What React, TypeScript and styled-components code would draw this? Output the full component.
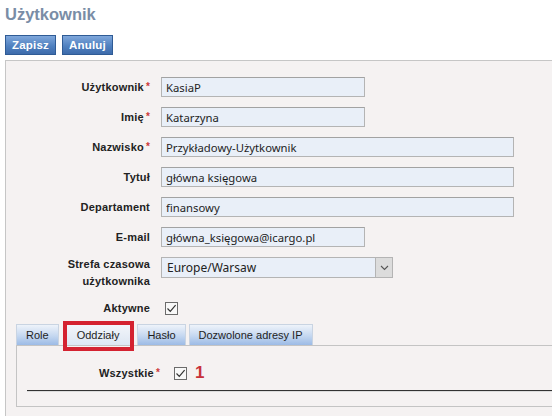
import React from "react";
import styled, { createGlobalStyle } from "styled-components";

const Global = createGlobalStyle`
  html, body { margin: 0; padding: 0; background: #ffffff; overflow: hidden; }
  body { font-family: "Liberation Sans", Arial, sans-serif; color: #222; }
`;

const Page = styled.div`
  padding: 3px 0 0 5px;
  width: 620px;
`;

const Title = styled.h1`
  margin: 0;
  font-family: "Liberation Sans", Arial, sans-serif;
  font-weight: bold;
  font-size: 16.5px;
  line-height: 22px;
  color: #7a8da6;
`;

const Toolbar = styled.div`
  display: flex;
  gap: 6px;
  margin-top: 10px;
`;

const Button = styled.button`
  height: 20px;
  width: 51px;
  padding: 0;
  border: 1px solid #2f5b95;
  background: linear-gradient(#7fa7db, #5081c0 55%, #3d6bab);
  color: #fff;
  font-family: "Liberation Sans", Arial, sans-serif;
  font-weight: bold;
  font-size: 11.5px;
  letter-spacing: 0.2px;
  cursor: pointer;
`;

const Panel = styled.div`
  margin-top: 5px;
  border: 1px solid #c6c6c6;
  background: #f5f2f2;
  padding: 16px 0 0 0;
  height: 420px;
`;

const FormGrid = styled.div`
  display: grid;
  grid-template-columns: 144px auto;
  column-gap: 11px;
  row-gap: 10px;
  align-items: center;
`;

const Label = styled.label<{ $multi?: boolean }>`
  text-align: right;
  font-weight: bold;
  font-size: 11px;
  letter-spacing: 0.2px;
  line-height: ${(p) => (p.$multi ? "17px" : "14px")};
  color: #222;
  ${(p) => p.$multi && "align-self: start; margin-top: -1px; padding-bottom: 1px;"}
`;

const Star = styled.span`
  color: #cc3838;
  font-size: 10px;
  margin-left: 2px;
  vertical-align: 1px;
`;

const TextInput = styled.input<{ $w: number }>`
  box-sizing: border-box;
  width: ${(p) => p.$w}px;
  height: 20px;
  border: 1px solid #b4b4b4;
  border-top-color: #a2a2a2;
  background: #e9eff8;
  padding: 0 4px;
  font-family: "Noto Sans", sans-serif;
  font-size: 11.3px;
  color: #1e1e1e;
  outline: none;
  justify-self: start;
`;

const SelectBox = styled.div`
  box-sizing: border-box;
  width: 232px;
  height: 21px;
  border: 1px solid #b4b4b4;
  background: #e9eff8;
  display: flex;
  align-items: center;
  justify-self: start;
  align-self: start;
`;

const SelectValue = styled.span`
  flex: 1;
  padding-left: 5px;
  font-family: "Noto Sans", sans-serif;
  font-size: 12px;
  color: #222;
`;

const SelectArrow = styled.span`
  width: 16px;
  height: 19px;
  background: #dcdcdc;
  border-left: 1px solid #b4b4b4;
  display: flex;
  align-items: center;
  justify-content: center;
`;

const Check = styled.span`
  box-sizing: border-box;
  width: 13px;
  height: 13px;
  border: 1px solid #6b6b6b;
  background: #f8f8f8;
  display: inline-flex;
  align-items: center;
  justify-content: center;
`;

const CheckCell = styled.div<{ $ml: number }>`
  display: flex;
  align-items: center;
  margin-left: ${(p) => p.$ml}px;
`;

const Tabs = styled.div`
  margin: 9px 0 0 10px;
`;

const TabBar = styled.div`
  display: flex;
  gap: 3px;
`;

const Tab = styled.div<{ $active?: boolean }>`
  position: relative;
  height: 20px;
  padding: 0 ${(p) => (p.$active ? 11 : 9)}px;
  margin: 0 ${(p) => (p.$active ? 3 : 0)}px;
  display: flex;
  align-items: center;
  font-family: "Liberation Sans", Arial, sans-serif;
  font-size: 11px;
  color: #1e1e1e;
  border: 1px solid #c9d4e2;
  border-bottom: none;
  background: ${(p) =>
    p.$active
      ? "linear-gradient(#f2f5fa, #dde6f2)"
      : "linear-gradient(#eef3fa, #c4d7f0 55%, #9cbbe6)"};

  ${(p) =>
    p.$active &&
    `
    &::after {
      content: "";
      position: absolute;
      top: -4px;
      left: -3px;
      right: -4px;
      bottom: -6px;
      border: 4px solid #d42230;
    }
  `}
`;

const TabPanel = styled.div`
  border: 1px solid #c4c4c4;
  border-right: none;
  background: #f5f2f2;
  padding: 20px 0 15px 0;
`;

const TabGrid = styled.div`
  display: grid;
  grid-template-columns: 143px auto;
  column-gap: 14px;
  align-items: center;
`;

const Annotation = styled.span`
  margin-left: 8px;
  color: #c8313a;
  font-weight: bold;
  font-size: 17px;
  line-height: 14px;
`;

const Divider = styled.div`
  margin: 10px 0 0 10px;
  height: 1px;
  background: #333;
  box-shadow: 0 1px 0 #dcdcdc;
`;

const Tick = () => (
  <svg width="11" height="11" viewBox="0 0 11 11">
    <path d="M1.5 5.5 L4.3 8.3 L9.6 2.2" fill="none" stroke="#333" strokeWidth="1.2" />
  </svg>
);

const Chevron = () => (
  <svg width="9" height="6" viewBox="0 0 9 6">
    <path d="M1 1 L4.5 4.5 L8 1" fill="none" stroke="#555" strokeWidth="1.1" />
  </svg>
);

type Field = { label: string; value: string; w: number; req?: boolean };

const fields: Field[] = [
  { label: "Użytkownik", value: "KasiaP", w: 204, req: true },
  { label: "Imię", value: "Katarzyna", w: 204, req: true },
  { label: "Nazwisko", value: "Przykładowy-Użytkownik", w: 353, req: true },
  { label: "Tytuł", value: "główna księgowa", w: 353 },
  { label: "Departament", value: "finansowy", w: 353 },
  { label: "E-mail", value: "główna_księgowa@icargo.pl", w: 204 },
];

export default function App() {
  return (
    <>
      <Global />
      <Page>
        <Title>Użytkownik</Title>
        <Toolbar>
          <Button>Zapisz</Button>
          <Button>Anuluj</Button>
        </Toolbar>
        <Panel>
          <FormGrid>
            {fields.map((f) => (
              <React.Fragment key={f.label}>
                <Label>
                  {f.label}
                  {f.req && <Star>*</Star>}
                </Label>
                <TextInput $w={f.w} readOnly value={f.value} />
              </React.Fragment>
            ))}
            <Label $multi>
              Strefa czasowa
              <br />
              użytkownika
            </Label>
            <SelectBox>
              <SelectValue>Europe/Warsaw</SelectValue>
              <SelectArrow>
                <Chevron />
              </SelectArrow>
            </SelectBox>
            <Label>Aktywne</Label>
            <CheckCell $ml={4}>
              <Check>
                <Tick />
              </Check>
            </CheckCell>
          </FormGrid>
          <Tabs>
            <TabBar>
              <Tab>Role</Tab>
              <Tab $active>Oddziały</Tab>
              <Tab>Hasło</Tab>
              <Tab>Dozwolone adresy IP</Tab>
            </TabBar>
            <TabPanel>
              <TabGrid>
                <Label>
                  Wszystkie<Star>*</Star>
                </Label>
                <CheckCell $ml={0}>
                  <Check>
                    <Tick />
                  </Check>
                  <Annotation>1</Annotation>
                </CheckCell>
              </TabGrid>
              <Divider />
            </TabPanel>
          </Tabs>
        </Panel>
      </Page>
    </>
  );
}
